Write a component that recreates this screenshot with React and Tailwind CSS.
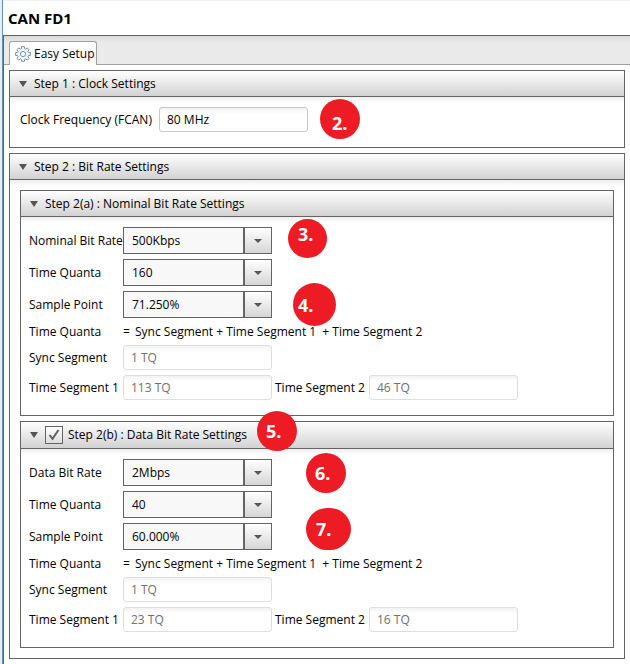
import React from "react";

function Gear() {
  return (
    <svg width="16" height="16" viewBox="0 0 16 16" fill="none" stroke="#7890a0" aria-hidden="true">
      <path
        fill="#eef4f8"
        strokeLinejoin="round"
        d="M6.6 0.6H9.4L9.7 2.7L10.6 3.1L12.3 1.9L14.1 3.7L12.9 5.4L13.3 6.3L15.4 6.6V9.4L13.3 9.7L12.9 10.6L14.1 12.3L12.3 14.1L10.6 12.9L9.7 13.3L9.4 15.4H6.6L6.3 13.3L5.4 12.9L3.7 14.1L1.9 12.3L3.1 10.6L2.7 9.7L0.6 9.4V6.6L2.7 6.3L3.1 5.4L1.9 3.7L3.7 1.9L5.4 3.1L6.3 2.7Z"
      />
      <circle cx="8" cy="8" r="2.6" fill="#ffffff" />
    </svg>
  );
}

function Panel({ title, control, children }) {
  return (
    <section className="border border-[#646464]">
      <div className={`flex items-center border-b border-[#646464] bg-linear-to-b from-white to-[#d2d2d2] pl-[9px] ${control ? "h-[27px]" : "h-[26px]"}`}>
        <button type="button" aria-label={`Collapse ${title}`} className="flex w-[15px]">
          <svg width="8" height="6" viewBox="0 0 8 6" aria-hidden="true">
            <path d="M0 0H8L4 6Z" fill="#555555" />
          </svg>
        </button>
        {control}
        <h2>{title}</h2>
      </div>
      <div className="bg-linear-to-b from-[#eeeeee] to-white to-[6px]">{children}</div>
    </section>
  );
}

function Choice({ id, label, value }) {
  return (
    <div className="flex h-[27px] items-center">
      <label htmlFor={id} className="w-[94px] shrink-0 whitespace-nowrap">{label}</label>
      <div className="relative">
        <select id={id} defaultValue={value} className="block h-[27px] w-[149px] appearance-none border border-[#646464] bg-[#f8f8f8] pl-[8px]">
          <option>{value}</option>
        </select>
        <span className="pointer-events-none absolute inset-y-0 right-0 flex w-[29px] items-center justify-center border border-l-2 border-[#646464] bg-linear-to-b from-white to-[#d6d6d6]">
          <svg width="8" height="4" viewBox="0 0 8 4" aria-hidden="true">
            <path d="M0 0H8L4 4Z" fill="#555555" />
          </svg>
        </span>
      </div>
    </div>
  );
}

function Box({ id, value, muted }) {
  return (
    <input
      id={id}
      defaultValue={value}
      readOnly={muted}
      className={`h-[25px] w-[149px] rounded-[3px] border bg-linear-to-b from-[#f2f2f2] to-white to-[6px] px-[7px] outline-none ${muted ? "border-[#dedede] text-[#707070]" : "border-[#c8c8c8]"}`}
    />
  );
}

function RateForm({ id, rateLabel, rate, quanta, point, seg1, seg2 }) {
  return (
    <div className="pt-[10px] pr-[10px] pb-[15px] pl-[8px]">
      <div className="flex flex-col gap-[5px]">
        <Choice id={`${id}-rate`} label={rateLabel} value={rate} />
        <Choice id={`${id}-quanta`} label="Time Quanta" value={quanta} />
        <Choice id={`${id}-point`} label="Sample Point" value={point} />
      </div>
      <div className="flex h-[27px] items-center whitespace-pre">
        <span className="w-[94px]">Time Quanta</span>
        <span className="w-[12px]">=</span>
        <span>Sync Segment + Time Segment 1  + Time Segment 2</span>
      </div>
      <div className="flex flex-col gap-[5px]">
        <div className="flex items-center">
          <label htmlFor={`${id}-sync`} className="w-[94px] shrink-0">Sync Segment</label>
          <Box id={`${id}-sync`} value="1 TQ" muted />
        </div>
        <div className="flex items-center">
          <label htmlFor={`${id}-seg1`} className="w-[94px] shrink-0 whitespace-nowrap">Time Segment 1</label>
          <Box id={`${id}-seg1`} value={seg1} muted />
          <label htmlFor={`${id}-seg2`} className="ml-[3px] w-[94px] shrink-0 whitespace-nowrap">Time Segment 2</label>
          <Box id={`${id}-seg2`} value={seg2} muted />
        </div>
      </div>
    </div>
  );
}

const markers = [
  { n: "2.", place: "left-[320px] top-[99px] size-[40px] pl-[12px] pt-[8px]" },
  { n: "3.", place: "left-[288px] top-[219px] size-[39px] pl-[10px] pb-[10px]" },
  { n: "4.", place: "left-[293px] top-[283px] size-[43px] pl-[5px]" },
  { n: "5.", place: "left-[257px] top-[411px] size-[40px] pl-[9px]" },
  { n: "6.", place: "left-[306px] top-[453px] size-[40px] pl-[9px]" },
  { n: "7.", place: "left-[306px] top-[508px] h-[42px] w-[45px] pl-[10px]" },
];

export default function App() {
  return (
    <div className="relative flex min-h-screen bg-white font-['Open_Sans','Noto_Sans',sans-serif] text-[12px] leading-4 text-black">
      <div className="w-[3px] shrink-0 border-r border-[#6d8fae] bg-[#ececec]" />
      <main className="flex min-w-0 flex-1 flex-col border-t border-[#efefef]">
        <h1 className="flex h-[34px] items-center pl-[5px] text-[15px] font-bold">CAN FD1</h1>
        <div className="flex-1 border-t border-l border-[#646464]">
          <div className="flex h-[29px] items-end border-b border-[#a0a0a0] bg-linear-to-b from-[#d8d8d8] to-[#eaeaea] to-[6px] pl-[5px]" role="tablist">
            <button type="button" role="tab" aria-selected="true" className="-mb-px flex h-[24px] items-center gap-[3px] rounded-t-[3px] border border-b-0 border-[#a0a0a0] bg-white pr-[2px] pl-[5px] whitespace-nowrap">
              <Gear />
              Easy Setup
            </button>
          </div>
          <div className="flex flex-col gap-[5px] px-[5px] pt-[5px]">
            <Panel title="Step 1 : Clock Settings">
              <div className="flex items-center px-[10px] pt-[10px] pb-[15px]">
                <label htmlFor="clock" className="w-[139px] shrink-0 whitespace-nowrap">Clock Frequency (FCAN)</label>
                <Box id="clock" value="80 MHz" />
              </div>
            </Panel>
            <Panel title="Step 2 : Bit Rate Settings">
              <div className="flex flex-col gap-[5px] p-[10px]">
                <Panel title="Step 2(a) : Nominal Bit Rate Settings">
                  <RateForm id="nominal" rateLabel="Nominal Bit Rate" rate="500Kbps" quanta="160" point="71.250%" seg1="113 TQ" seg2="46 TQ" />
                </Panel>
                <Panel
                  title="Step 2(b) : Data Bit Rate Settings"
                  control={
                    <span className="relative mr-[5px] flex">
                      <input type="checkbox" defaultChecked aria-label="Step 2(b) : Data Bit Rate Settings" className="size-[18px] appearance-none border border-[#646464] bg-linear-to-b from-white to-[#dddddd]" />
                      <svg className="pointer-events-none absolute inset-0" width="18" height="18" viewBox="0 0 18 18" fill="none" stroke="#606060" strokeWidth="2" aria-hidden="true">
                        <path d="M4.5 9L7.5 12.8L13.5 4" />
                      </svg>
                    </span>
                  }
                >
                  <RateForm id="data" rateLabel="Data Bit Rate" rate="2Mbps" quanta="40" point="60.000%" seg1="23 TQ" seg2="16 TQ" />
                </Panel>
              </div>
            </Panel>
          </div>
        </div>
      </main>
      {markers.map((m) => (
        <span key={m.n} className={`absolute flex items-center rounded-full bg-[#ed1c24] text-[18px] leading-5 font-bold text-white ${m.place}`}>
          {m.n}
        </span>
      ))}
    </div>
  );
}
